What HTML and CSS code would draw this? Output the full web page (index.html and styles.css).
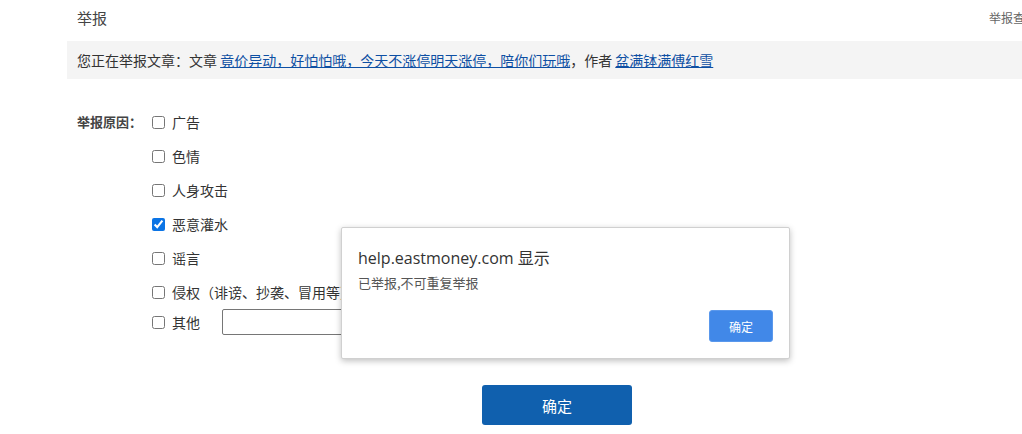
FILE: index.html
```html
<!DOCTYPE html>
<html lang="zh-CN">
<head>
    <meta charset="UTF-8">
    <title>举报</title>
    <link rel="stylesheet" href="styles.css">
</head>
<body>
    <div class="wrap">
        <div class="top">
            <span class="title">举报</span>
            <a class="query">举报查询</a>
        </div>
        <div class="notice">
            您正在举报文章：文章 <a href="#">竟价异动，好怕怕哦，今天不涨停明天涨停，陪你们玩哦</a>，作者 <a href="#">盆满钵满傅红雪</a>
        </div>

        <form class="report">
            <div class="label">举报原因：</div>
            <div class="options">
                <label class="opt"><input type="checkbox"> 广告</label>
                <label class="opt"><input type="checkbox"> 色情</label>
                <label class="opt"><input type="checkbox"> 人身攻击</label>
                <label class="opt"><input type="checkbox" checked> 恶意灌水</label>
                <label class="opt"><input type="checkbox"> 谣言</label>
                <label class="opt"><input type="checkbox"> 侵权（诽谤、抄袭、冒用等）</label>
                <label class="opt other"><input type="checkbox"> 其他 <input type="text" class="other-text"></label>
            </div>
        </form>

        <div class="submit-row">
            <button class="submit" type="button">确定</button>
        </div>
    </div>

    <!-- browser alert -->
    <div class="alert">
        <div class="alert-title">help.eastmoney.com 显示</div>
        <div class="alert-msg">已举报,不可重复举报</div>
        <div class="alert-foot">
            <button class="alert-ok" type="button">确定</button>
        </div>
    </div>
</body>
</html>
```

FILE: styles.css
```css
body {
    margin: 0;
    overflow: hidden;
    font-family: "Noto Sans CJK SC", "Liberation Sans", sans-serif;
    color: #333;
    background: #fff;
}
.wrap {
    width: 980px;
    margin-left: 67px;
}
.top {
    height: 41px;
    display: flex;
    justify-content: space-between;
    align-items: center;
    padding: 0 10px;
    margin-top: -3px;
}
.title {
    font-size: 15px;
    color: #444;
}
.query {
    font-size: 12px;
    color: #666;
}
.notice {
    background: #f4f4f4;
    height: 38px;
    line-height: 38px;
    padding-left: 10px;
    margin-top: 3px;
    font-size: 14px;
    color: #333;
}
.notice a {
    color: #0d4fa3;
}
.report {
    display: flex;
    margin-top: 33px;
    padding-left: 10px;
    font-size: 14px;
}
.label {
    width: 75px;
    font-size: 13px;
    font-weight: bold;
    line-height: 20px;
    color: #444;
}
.options {
    display: flex;
    flex-direction: column;
}
.opt {
    display: flex;
    align-items: center;
    height: 20px;
    margin-bottom: 14px;
    color: #333;
}
.opt input[type="checkbox"] {
    width: 13px;
    height: 13px;
    margin: 0 7px 0 0;
    accent-color: #0b74e5;
}
.opt.other {
    height: 26px;
    margin-top: -7px;
}
.other-text {
    width: 300px;
    height: 22px;
    margin-left: 22px;
    border: 1px solid #767676;
    border-radius: 2px;
    padding: 1px 2px;
}
.submit-row {
    display: flex;
    justify-content: center;
    margin-top: 36px;
}
.submit {
    width: 150px;
    height: 40px;
    background: #1060ae;
    color: #fff;
    border: none;
    border-radius: 3px;
    font-size: 15px;
    font-family: inherit;
}
.alert {
    position: absolute;
    left: 341px;
    top: 227px;
    width: 447px;
    height: 130px;
    background: #fff;
    border: 1px solid #d0d0d0;
    border-radius: 2px;
    box-shadow: 0 2px 6px rgba(0, 0, 0, 0.25);
}
.alert-title {
    margin: 17px 0 0 16px;
    font-size: 16px;
    font-family: "Open Sans", "Noto Sans CJK SC", sans-serif;
    color: #333;
}
.alert-msg {
    margin: 4px 0 0 16px;
    font-size: 13px;
    color: #555;
}
.alert-foot {
    display: flex;
    justify-content: flex-end;
    padding-right: 16px;
    margin-top: 18px;
}
.alert-ok {
    width: 64px;
    height: 32px;
    background: #4188e8;
    color: #fff;
    border: 1px solid #5a98ec;
    border-radius: 3px;
    font-size: 12px;
    font-family: inherit;
}
```
